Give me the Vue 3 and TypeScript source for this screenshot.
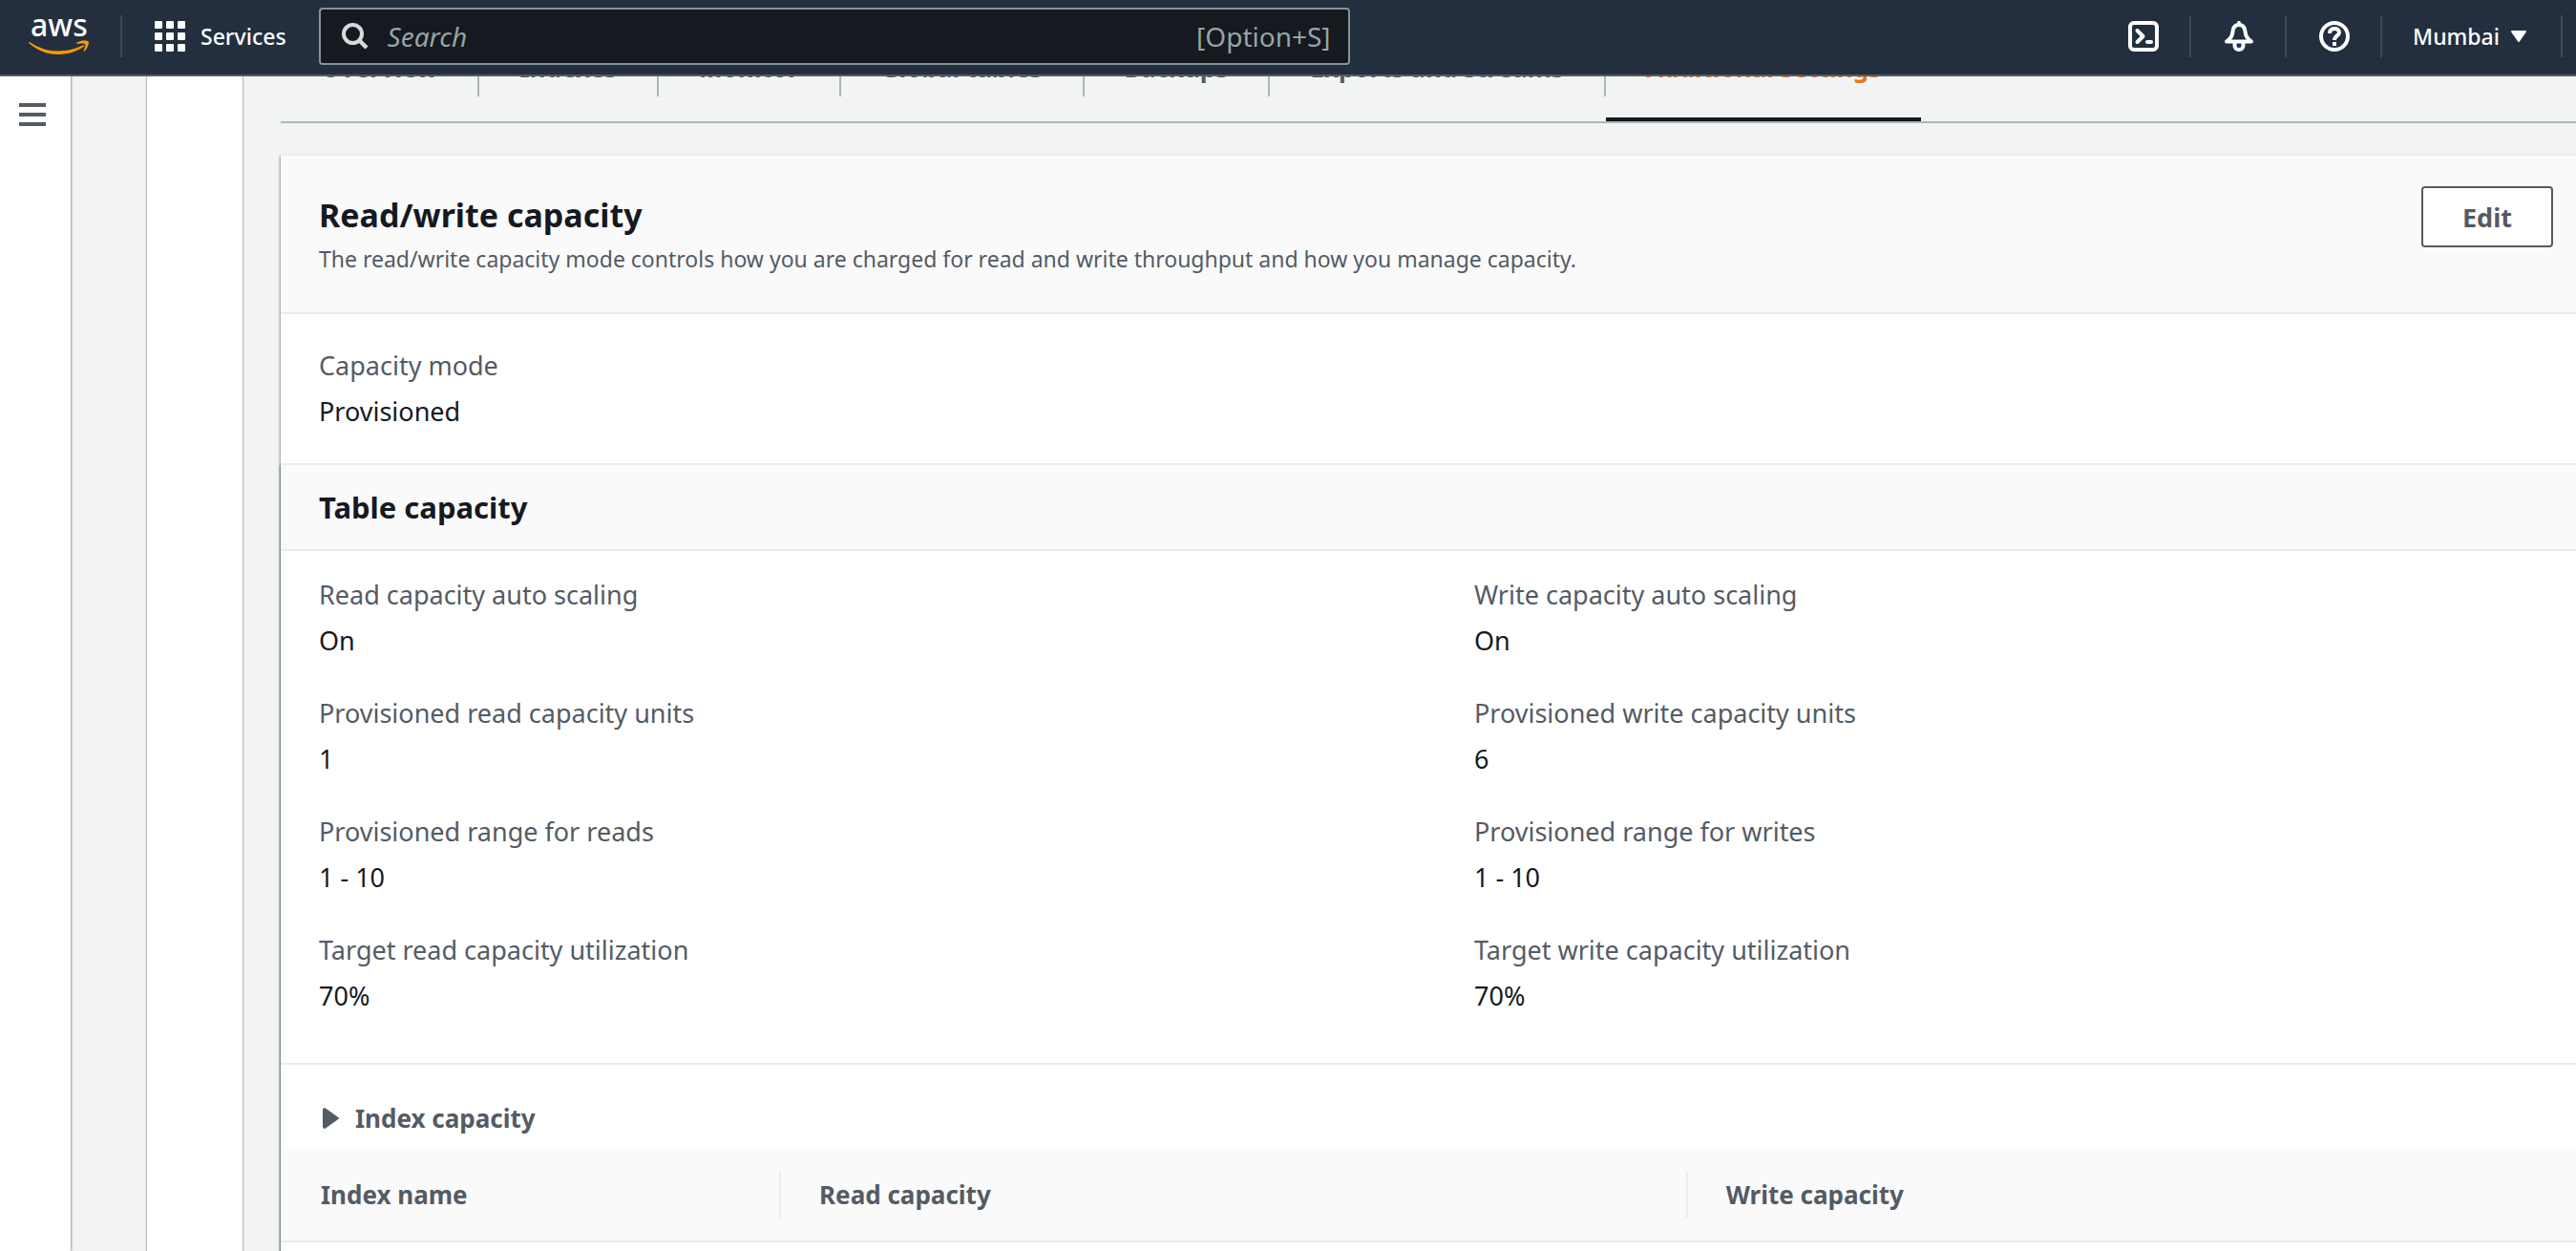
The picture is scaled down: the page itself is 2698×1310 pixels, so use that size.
<script setup lang="ts">
interface Tab {
  label: string
  active?: boolean
}

interface Field {
  label: string
  value: string
}

const tabs: Tab[] = [
  { label: 'Overview' },
  { label: 'Indexes' },
  { label: 'Monitor' },
  { label: 'Global tables' },
  { label: 'Backups' },
  { label: 'Exports and streams' },
  { label: 'Additional settings', active: true },
]

const readFields: Field[] = [
  { label: 'Read capacity auto scaling', value: 'On' },
  { label: 'Provisioned read capacity units', value: '1' },
  { label: 'Provisioned range for reads', value: '1 - 10' },
  { label: 'Target read capacity utilization', value: '70%' },
]

const writeFields: Field[] = [
  { label: 'Write capacity auto scaling', value: 'On' },
  { label: 'Provisioned write capacity units', value: '6' },
  { label: 'Provisioned range for writes', value: '1 - 10' },
  { label: 'Target write capacity utilization', value: '70%' },
]

const columns: string[] = ['Index name', 'Read capacity', 'Write capacity']
</script>

<template>
  <div class="page">
    <header class="topbar">
      <a class="logo" href="#" aria-label="AWS home">
        <svg width="66" height="60" viewBox="0 0 66 60">
          <text x="2" y="30" class="logo-text">aws</text>
          <path
            d="M1 36 C11 42.500 20 45.500 31 45.500 C41 45.500 50 43 57 39.300 C58.200 38.800 58.800 39.800 58 40.600 C51 46 41 49 31.500 49 C19 49 8 44.500 .5 37.300 C-.2 36.500 .2 35.700 1 36 Z"
            fill="#ff9900"
          />
          <path
            d="M50.500 36.500 C54 34 61 34 62.500 35.300 C63.800 37 61.500 43 58.800 45.500 C58 46.200 57.300 45.800 57.700 44.800 C58.600 42.500 60 39 59.200 38.200 C58.300 37.300 54.500 37.500 51.500 37.900 C50.200 38 49.800 37.200 50.500 36.500 Z"
            fill="#ff9900"
          />
        </svg>
      </a>
      <span class="divider"></span>
      <button class="services" type="button">
        <svg width="32" height="32" viewBox="0 0 32 32" fill="#fff">
          <rect width="8" height="8" rx="1" />
          <rect x="12" width="8" height="8" rx="1" />
          <rect x="24" width="8" height="8" rx="1" />
          <rect y="12" width="8" height="8" rx="1" />
          <rect x="12" y="12" width="8" height="8" rx="1" />
          <rect x="24" y="12" width="8" height="8" rx="1" />
          <rect y="24" width="8" height="8" rx="1" />
          <rect x="12" y="24" width="8" height="8" rx="1" />
          <rect x="24" y="24" width="8" height="8" rx="1" />
        </svg>
        <span>Services</span>
      </button>
      <label class="search">
        <svg width="28" height="28" viewBox="0 0 28 28" fill="none" stroke="#d5dbdb">
          <circle cx="11.500" cy="11.500" r="9.500" stroke-width="4" />
          <path d="M18 18 L26 26" stroke-width="4.500" />
        </svg>
        <input type="text" placeholder="Search" aria-label="Search" />
        <span class="shortcut">[Option+S]</span>
      </label>
      <nav class="tools">
        <button class="tool" type="button" aria-label="CloudShell">
          <svg width="32" height="32" viewBox="0 0 32 32" fill="none" stroke="#fff" stroke-width="4">
            <rect x="2" y="2" width="28" height="28" rx="4" />
            <path d="M9.500 10 L15.500 16 L9.500 22" stroke-linecap="round" stroke-linejoin="round" />
            <path d="M20 22 H24" stroke-linecap="round" />
          </svg>
        </button>
        <span class="divider"></span>
        <button class="tool" type="button" aria-label="Notifications">
          <svg width="32" height="32" viewBox="0 0 32 32" fill="none" stroke="#fff" stroke-linejoin="round">
            <path d="M16 1.500 V4" stroke-width="3.500" stroke-linecap="round" />
            <path d="M3 21.500 C8 17.500 9 15.500 9.500 11 C10 6 12.500 4 16 4 C19.500 4 22 6 22.500 11 C23 15.500 24 17.500 29 21.500 Z" stroke-width="4" />
            <path d="M11.500 23 V25.500 C11.500 28.500 13.500 30 16 30 C18.500 30 20.500 28.500 20.500 25.500 V23" stroke-width="4" />
          </svg>
        </button>
        <span class="divider"></span>
        <button class="tool" type="button" aria-label="Help">
          <svg width="32" height="32" viewBox="0 0 32 32" fill="none" stroke="#fff" stroke-width="4">
            <circle cx="16" cy="16" r="14" />
            <path d="M11 13 C11 9.500 13 8 16 8 C19 8 21 9.500 21 12 C21 15.500 16 15.500 16 20" />
            <path d="M16 22 V26" />
          </svg>
        </button>
        <span class="divider"></span>
        <button class="region" type="button">
          <span>Mumbai</span>
          <svg width="16" height="12" viewBox="0 0 16 12">
            <path d="M1 1 H15 L8 11 Z" fill="#fff" stroke="#fff" stroke-width="2" stroke-linejoin="round" />
          </svg>
        </button>
        <span class="divider"></span>
      </nav>
    </header>

    <aside class="rail">
      <button class="menu" type="button" aria-label="Open navigation">
        <svg width="28" height="24" viewBox="0 0 28 24" fill="#545b64">
          <rect width="28" height="4" />
          <rect y="10" width="28" height="4" />
          <rect y="20" width="28" height="4" />
        </svg>
      </button>
    </aside>
    <aside class="panel"></aside>

    <main class="content">
      <div class="tabs" role="tablist">
        <button
          v-for="tab in tabs"
          :key="tab.label"
          class="tab"
          :class="{ active: tab.active }"
          type="button"
          role="tab"
          :aria-selected="tab.active ? 'true' : 'false'"
        >
          <span class="tab-label">{{ tab.label }}</span>
        </button>
      </div>

      <section class="card">
        <div class="card-head">
          <div class="card-title">
            <h2>Read/write capacity</h2>
            <p>
              The read/write capacity mode controls how you are charged for read and write throughput and how you
              manage capacity.
            </p>
          </div>
          <button class="edit" type="button">Edit</button>
        </div>

        <dl class="fields mode">
          <div class="field">
            <dt>Capacity mode</dt>
            <dd>Provisioned</dd>
          </div>
        </dl>

        <div class="subcard">
          <h3>Table capacity</h3>
          <div class="columns">
            <dl class="fields">
              <div v-for="field in readFields" :key="field.label" class="field">
                <dt>{{ field.label }}</dt>
                <dd>{{ field.value }}</dd>
              </div>
            </dl>
            <dl class="fields">
              <div v-for="field in writeFields" :key="field.label" class="field">
                <dt>{{ field.label }}</dt>
                <dd>{{ field.value }}</dd>
              </div>
            </dl>
          </div>

          <button class="expander" type="button" aria-expanded="false">
            <svg width="18" height="22" viewBox="0 0 18 22">
              <path d="M1 2 L2 1 L16 11 L2 21 L1 20 Z" fill="#545b64" stroke="#545b64" stroke-width="2" stroke-linejoin="round" />
            </svg>
            <span>Index capacity</span>
          </button>

          <table class="index-table">
            <thead>
              <tr>
                <th v-for="column in columns" :key="column" scope="col">
                  <div class="heading">{{ column }}</div>
                </th>
              </tr>
            </thead>
          </table>
        </div>
      </section>
    </main>
  </div>
</template>

<style>
body {
  margin: 0;
  background: #f2f3f3;
}
</style>

<style scoped>
.page {
  display: flex;
  box-sizing: border-box;
  min-height: 100vh;
  overflow: hidden;
  background: #f2f3f3;
  color: #16191f;
  font-family: 'Noto Sans', 'Open Sans', sans-serif;
  font-size: 27px;
}

button {
  margin: 0;
  padding: 0;
  border: 0;
  background: none;
  color: inherit;
  font: inherit;
  cursor: pointer;
}

svg {
  display: block;
  flex: none;
}

/* Top bar */
.topbar {
  position: fixed;
  top: 0;
  left: 0;
  right: 0;
  z-index: 10;
  display: flex;
  align-items: center;
  box-sizing: border-box;
  height: 80px;
  padding: 0 14px 2px 30px;
  border-bottom: 2px solid #545b64;
  background: #232f3e;
  color: #fff;
  font-size: 23px;
}

.logo svg {
  overflow: visible;
}

.logo-text {
  fill: #fff;
  font-family: 'Noto Sans', sans-serif;
  font-size: 32px;
  font-weight: 500;
}

.divider {
  flex: none;
  width: 2px;
  height: 44px;
  background: #414750;
}

.logo {
  margin-right: 30px;
}

.services {
  display: flex;
  align-items: center;
  gap: 16px;
  margin: 0 34px;
  font-weight: 500;
}

.search {
  display: flex;
  flex: 0 1 1080px;
  align-items: center;
  box-sizing: border-box;
  height: 60px;
  padding: 0 18px 0 22px;
  border: 2px solid #879596;
  border-radius: 4px;
  background: #16191f;
  color: #95a5a6;
  font-size: 28px;
}

.search input {
  flex: 1;
  min-width: 0;
  margin-left: 20px;
  padding: 0;
  border: 0;
  outline: 0;
  background: none;
  color: #fff;
  font: inherit;
}

.search input::placeholder {
  color: #95a5a6;
  font-style: italic;
  opacity: 1;
}

.tools {
  display: flex;
  align-items: center;
  margin-left: auto;
}

.tool {
  padding: 0 32px 0 34px;
}

.region {
  display: flex;
  align-items: center;
  gap: 12px;
  padding: 0 36px 0 32px;
  font-weight: 500;
}

/* Side rails */
.rail {
  flex: 0 0 74px;
  background: #fff;
  box-shadow: 1px 0 2px rgba(0, 28, 36, 0.4);
}

.menu {
  margin: 108px 0 0 20px;
}

.panel {
  flex: 0 0 100px;
  margin-left: 80px;
  background: #fff;
  box-shadow: 0 0 1px 1px rgba(0, 28, 36, 0.25);
}

/* Tabs */
.content {
  display: flex;
  flex: 1;
  flex-direction: column;
  min-width: 0;
  padding: 51px 0 0 40px;
}

.tabs {
  display: flex;
  border-bottom: 2px solid #aab7b8;
}

.tab {
  padding-bottom: 22px;
  border-bottom: 4px solid transparent;
  color: #545b64;
  font-size: 26px;
  font-weight: 700;
  line-height: 40px;
}

.tab-label {
  display: block;
  padding: 0 42px 10px;
  border-right: 2px solid #aab7b8;
}

.tab.active {
  border-bottom-color: #16191f;
  color: #ec7211;
}

.tab.active .tab-label {
  border-right: 0;
}

/* Card */
.card {
  display: flex;
  flex: 1;
  flex-direction: column;
  margin-top: 32px;
  border-top: 2px solid #eaeded;
  background: #fff;
  box-shadow: -1px 2px 2px rgba(0, 28, 36, 0.4);
}

.card-head {
  display: flex;
  align-items: flex-start;
  justify-content: space-between;
  padding: 32px 24px 40px 40px;
  border-bottom: 2px solid #eaeded;
  background: #fafafa;
}

.card-title {
  padding-top: 8px;
}

h2,
h3,
p,
dl,
dd {
  margin: 0;
}

h2 {
  font-size: 34px;
  line-height: 44px;
}

.card-title p {
  margin-top: 8px;
  color: #545b64;
  font-size: 23px;
  line-height: 32px;
}

.edit {
  box-sizing: border-box;
  width: 138px;
  height: 64px;
  border: 2px solid #545b64;
  border-radius: 4px;
  background: #fff;
  color: #545b64;
  font-size: 27px;
  font-weight: 700;
}

.fields {
  display: flex;
  flex-direction: column;
  gap: 32px;
  line-height: 44px;
}

.mode {
  padding: 32px 40px;
}

.field {
  display: flex;
  flex-direction: column;
  gap: 4px;
}

dt {
  color: #545b64;
}

.subcard {
  flex: 1;
  border-top: 2px solid #eaeded;
  box-shadow: -1px 2px 2px rgba(0, 28, 36, 0.4);
}

h3 {
  padding-left: 40px;
  border-bottom: 2px solid #eaeded;
  background: #fafafa;
  font-size: 31px;
  line-height: 88px;
}

.columns {
  display: grid;
  grid-template-columns: 1fr 1fr;
  gap: 80px;
  padding: 24px 24px 48px 40px;
  border-bottom: 2px solid #eaeded;
}

.expander {
  display: flex;
  align-items: center;
  gap: 16px;
  padding: 34px 40px 10px 44px;
  color: #545b64;
  font-size: 26px;
  font-weight: 700;
  line-height: 44px;
}

.index-table {
  width: 100%;
  border-collapse: collapse;
  table-layout: fixed;
  background: #fafafa;
}

th {
  padding: 24px 0;
  border-bottom: 2px solid #eaeded;
  color: #545b64;
  font-size: 26px;
  line-height: 48px;
  text-align: left;
}

th:nth-child(1) {
  width: 21.8%;
}

th:nth-child(2) {
  width: 39.5%;
}

.heading {
  padding-left: 40px;
  border-right: 2px solid #eaeded;
}

th:first-child .heading {
  padding-left: 42px;
}

th:last-child .heading {
  border-right: 0;
}
</style>
